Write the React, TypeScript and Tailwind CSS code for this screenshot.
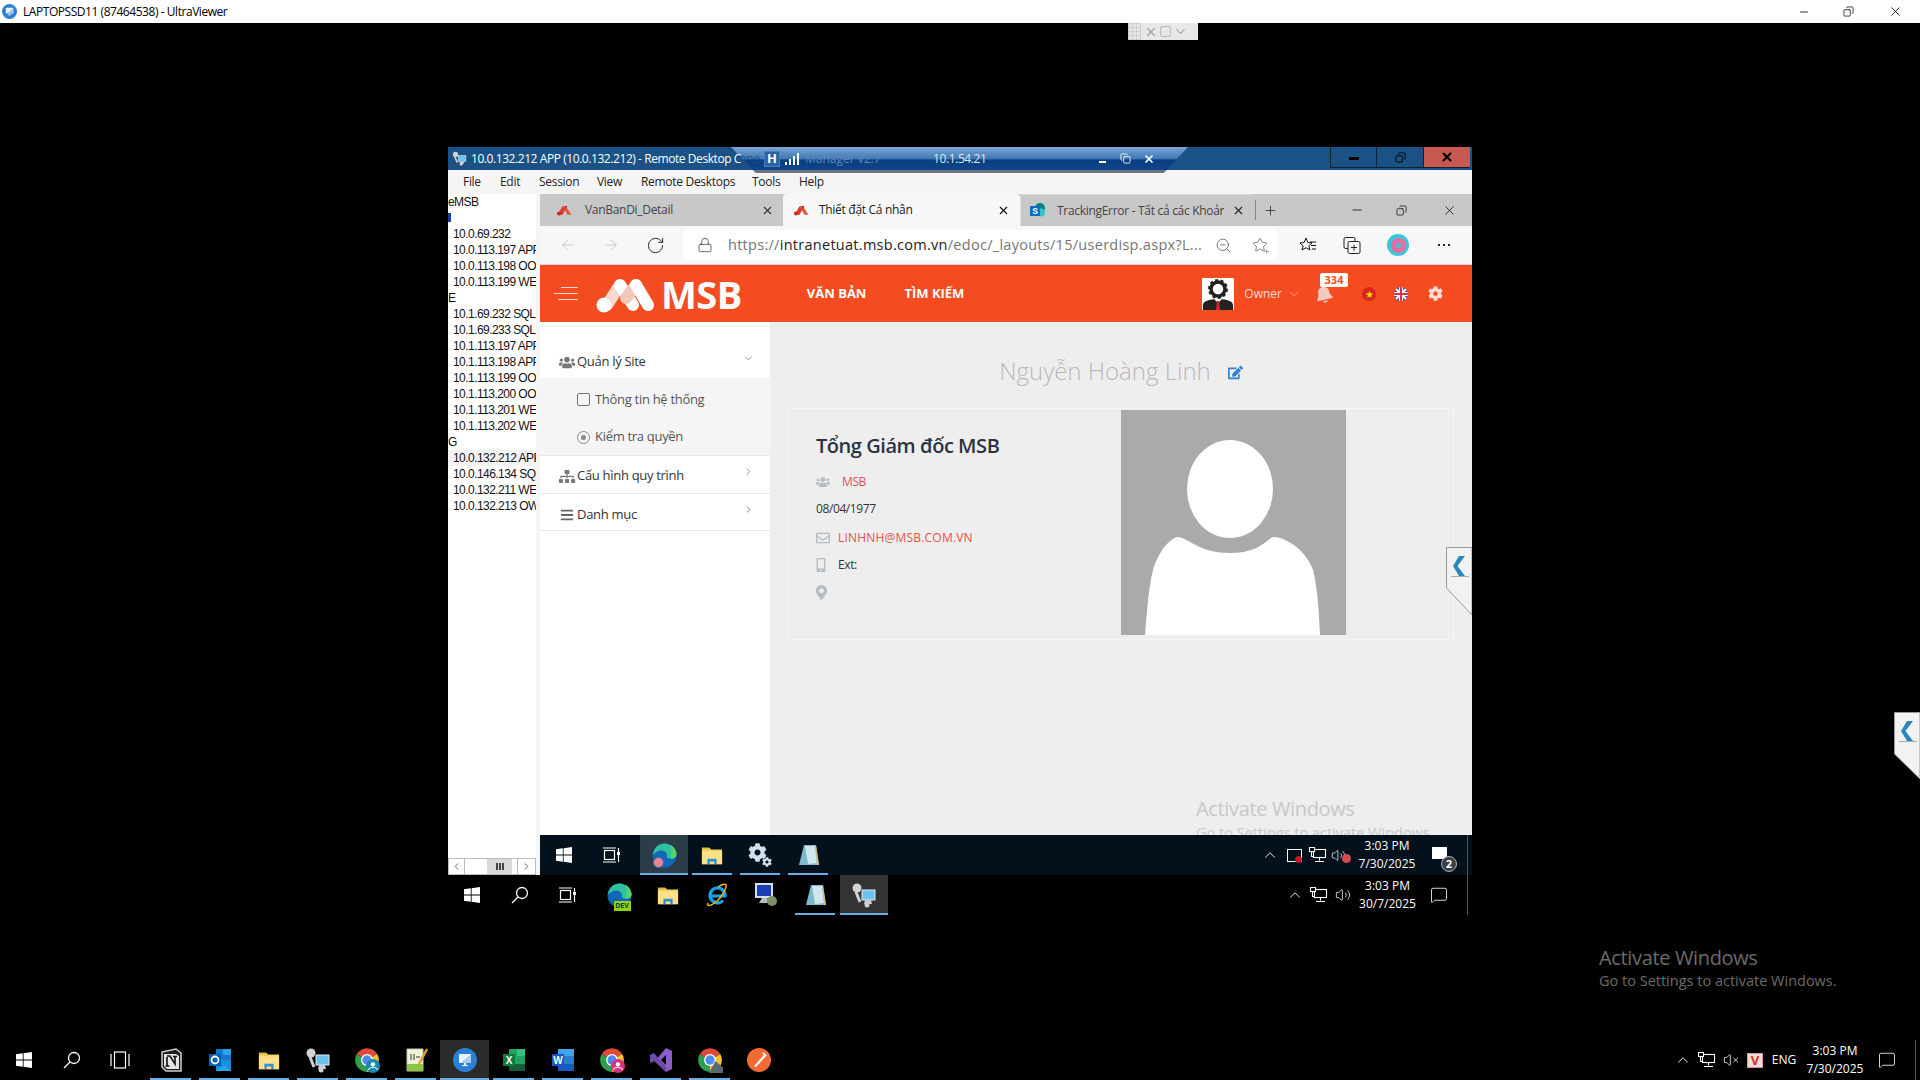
import React from "react";
import { ArrowLeft, ArrowRight, ChevronDown, ChevronLeft, ChevronRight, ChevronUp, Copy, Lock, MessageSquare, Minus, Plus, RotateCw, Square, Star, Volume2, VolumeX, X, ZoomOut } from "lucide-react";
import { FaBars, FaBell, FaCog, FaEdit, FaMapMarkerAlt, FaMobileAlt, FaRegEnvelope, FaSitemap, FaUsers } from "react-icons/fa";

const Win = ({ s = 16 }: { s?: number }) => (
  <svg width={s} height={s} viewBox="0 0 16 16" fill="#fff">
    <path d="M0 2.3 6.8 1.3V7.5H0zM7.6 1.2 16 0V7.5H7.6zM0 8.4H6.8V14.7L0 13.7zM7.6 8.4H16V16L7.6 14.8z" />
  </svg>
);
const TaskView = () => (
  <svg width="18" height="16" viewBox="0 0 18 16" fill="none" stroke="#fff" strokeWidth="1.2">
    <rect x="1.5" y="3.5" width="10" height="9" />
    <path d="M0 1h13M0 15h13M15.5 1v4M15.5 8v7" />
    <rect x="14" y="5" width="3" height="3" fill="#fff" stroke="none" />
  </svg>
);
const TaskViewOuter = () => (
  <svg width="20" height="18" viewBox="0 0 20 18" fill="none" stroke="#fff" strokeWidth="1.2">
    <rect x="4.5" y="1" width="11" height="16" />
    <path d="M1 3v12M19 3v12" />
  </svg>
);
const SearchW = () => (
  <svg width="18" height="18" viewBox="0 0 18 18" fill="none" stroke="#fff" strokeWidth="1.3">
    <circle cx="11" cy="7" r="5.5" />
    <path d="M7 11 1 17" />
  </svg>
);
const Edge = ({ dev, badge }: { dev?: boolean; badge?: boolean }) => (
  <div className="relative w-[25px] h-[25px]">
    <svg width="25" height="25" viewBox="0 0 24 24">
      <circle cx="12" cy="12" r="11.5" fill="#1268b8" />
      <path d="M1 11C2 4 7 .5 12 .5c6 0 11.5 5 11.5 10.5 0 3-3 4-6 4-2 0-4-1-3-3 0-4-6-6-9-4-1.500 1-3 2-4.500 3z" fill="#2fc0a0" />
      <path d="M18 2c3 2 5.500 5 5.500 9 0 3-3 4-6 4 1-4 2-9 .5-13z" fill="#56d36b" />
      <path d="M8 15c0 4 3 8 7 8.500-3 1-6 .5-8-1-3-2-3-7.500 1-7.500z" fill="#0c5fa8" />
    </svg>
    {dev && <span className="absolute left-[7px] bottom-[-3px] w-[17px] h-[10px] bg-[#8ed414] text-[7px] leading-[10px] font-bold text-center text-[#234]">DEV</span>}
    {badge && <span className="absolute left-[1px] bottom-0 w-[11px] h-[11px] rounded-full bg-[#e8849a] border border-[#3b6bb0]" />}
  </div>
);
const Folder = ({ s = 22 }: { s?: number }) => (
  <svg width={s} height={s} viewBox="0 0 24 24">
    <path d="M1 4h8l2 2h12v16H1z" fill="#f6d365" />
    <path d="M1 4h8l2 2H1z" fill="#e5b63e" />
    <path d="M1 8h22v14H1z" fill="#fce08a" />
    <path d="M7 16h10v6h-2.500v-3h-5v3H7z" fill="#2f8fd8" />
  </svg>
);
const IE = () => (
  <svg width="24" height="24" viewBox="0 0 24 24" fill="none">
    <path d="M5 13h15A7.500 7.500 0 1 0 18 17.500" stroke="#17a3ea" strokeWidth="3.200" />
    <path d="M3 20C1 24 6 23 11 19S22 5 21 2c-1-2-5 0-8 2" stroke="#f2b516" strokeWidth="1.500" />
  </svg>
);
const Gears = () => (
  <div className="relative w-[24px] h-[24px] text-[#cfe0ee]">
    <FaCog size={19} className="absolute left-0 top-0" />
    <FaCog size={10} className="absolute right-0 bottom-0" />
  </div>
);
const Note = () => (
  <svg width="24" height="24" viewBox="0 0 24 24">
    <path d="M8 2h12l3 20H3z" fill="#7fb8cc" />
    <path d="M9 3h10l2 17-9 1z" fill="#cfe7ee" />
    <path d="M19 2h1l3 20h-2z" fill="#d6b980" />
  </svg>
);
const RdpComputer = () => (
  <svg width="24" height="26" viewBox="0 0 24 26">
    <rect x="2" y="1" width="18" height="15" fill="#d7dde8" />
    <rect x="4" y="3" width="14" height="11" fill="#1a3fb5" />
    <path d="M9 16h5l4 5H6z" fill="#b7bcc5" />
    <circle cx="19" cy="19" r="5" fill="#7b9266" />
  </svg>
);
const RDCMan = ({ s = 26 }: { s?: number }) => (
  <svg width={s} height={s} viewBox="0 0 26 26">
    <rect x="11" y="8" width="13" height="10" fill="#6cc4ee" stroke="#dfeaf2" />
    <path d="M14 18h6l1 4h-8z" fill="#c9cdd3" />
    <circle cx="6" cy="6" r="4.500" fill="#d3d3d3" />
    <path d="M5 10 9 20" stroke="#d0d0d0" strokeWidth="3" />
    <circle cx="16" cy="23" r="2.500" fill="#cfcfcf" />
  </svg>
);
const Chrome = ({ badge, photo }: { badge?: string; photo?: boolean }) => (
  <svg width="26" height="26" viewBox="0 0 24 24">
    <path d="M12 12 2.500 6.500A11 11 0 0 1 21.500 6.500Z" fill="#de4a3c" />
    <path d="M12 12 21.500 6.500A11 11 0 0 1 12 23Z" fill="#f6c22c" />
    <path d="M12 12 12 23A11 11 0 0 1 2.500 6.500Z" fill="#2f9e4e" />
    <circle cx="12" cy="12" r="5.500" fill="#fff" />
    <circle cx="12" cy="12" r="4.300" fill="#4a8cf0" />
    {badge && (
      <>
        <circle cx="17.500" cy="17.500" r="6.500" fill={badge} />
        <circle cx="17.500" cy="16" r="2" fill="#fff" />
        <path d="M13 21c2-3 7-3 9 0" fill="none" stroke="#fff" />
      </>
    )}
    {photo && <path d="M11 24 17 13l7 6v5z" fill="#5a6a70" />}
  </svg>
);
const Notion = () => (
  <svg width="22" height="24" viewBox="0 0 22 24">
    <path d="M2 4 16 1l5 4v18L6 23l-4-4z" fill="#1c1c1c" stroke="#cfcfcf" strokeWidth="1.500" />
    <path d="M4 6h12l3 2v13H7l-3-3z" fill="#e4e4e4" />
    <path d="M7 8h3l5 8V9M7 18V9M5.500 18h4M13 8.500h4" stroke="#111" strokeWidth="1.600" fill="none" />
  </svg>
);
const Outlook = () => (
  <svg width="24" height="24" viewBox="0 0 24 24">
    <rect x="8" y="1" width="15" height="12" fill="#0f78d4" />
    <rect x="15" y="1" width="8" height="6" fill="#28a8ea" />
    <path d="M8 12h15v11H8z" fill="#1490df" />
    <path d="M8 23l8-6 7 6z" fill="#28a8ea" />
    <rect x="1" y="6" width="12" height="12" fill="#0a5fae" />
    <circle cx="7" cy="12" r="3.500" fill="none" stroke="#fff" strokeWidth="1.800" />
  </svg>
);
const NotepadPP = () => (
  <svg width="24" height="26" viewBox="0 0 24 26">
    <path d="M3 2h16v22H3z" fill="#eef3d9" stroke="#c9c9a8" />
    <path d="M3 17h16v7H3z" fill="#8ec63f" />
    <path d="M7 7v6M10 7v6M12 10h4" stroke="#333" />
    <path d="M23 2 15 17" stroke="#e3a226" strokeWidth="2.500" />
  </svg>
);
const Ultra = ({ s = 24 }: { s?: number }) => (
  <svg width={s} height={s} viewBox="0 0 24 24">
    <circle cx="12" cy="12" r="12" fill="#2b7fd4" />
    <rect x="6" y="6" width="12" height="9" fill="#e9f3fb" />
    <path d="M9 17h6v1H9zM11 15h2v2h-2z" fill="#e9f3fb" />
    <path d="M18 6v9L8 15z" fill="#a9cdec" />
  </svg>
);
const Excel = () => (
  <svg width="24" height="24" viewBox="0 0 24 24">
    <rect x="7" y="1" width="16" height="22" rx="1" fill="#21a366" />
    <rect x="15" y="1" width="8" height="7" fill="#33c481" />
    <rect x="7" y="16" width="16" height="7" fill="#185c37" />
    <rect x="1" y="6" width="12" height="12" fill="#107c41" />
    <text x="7" y="15.500" textAnchor="middle" fontSize="10" fontWeight="700" fill="#fff" fontFamily="Liberation Sans">X</text>
  </svg>
);
const Word = () => (
  <svg width="24" height="24" viewBox="0 0 24 24">
    <rect x="7" y="1" width="16" height="22" rx="1" fill="#2b7cd3" />
    <rect x="7" y="1" width="16" height="7" fill="#41a5ee" />
    <rect x="7" y="16" width="16" height="7" fill="#185abd" />
    <rect x="1" y="6" width="12" height="12" fill="#185abd" />
    <text x="7" y="15.500" textAnchor="middle" fontSize="10" fontWeight="700" fill="#fff" fontFamily="Liberation Sans">W</text>
  </svg>
);
const VS = () => (
  <svg width="24" height="26" viewBox="0 0 24 26">
    <path d="M17 1 23 4v18l-6 3L6 14z" fill="#8a5fc7" />
    <path d="M1 8l4-2 12 14v5L5 14l-2 2-2-1z" fill="#6d4aa5" />
    <path d="M17 8v10l-5-5z" fill="#000" />
  </svg>
);
const Postman = () => (
  <svg width="24" height="24" viewBox="0 0 24 24">
    <circle cx="12" cy="12" r="12" fill="#f36b34" />
    <path d="M7 18 18 6l1 2L9 19z" fill="#fff" />
    <path d="M16 5l3 3" stroke="#fff" strokeWidth="2" />
  </svg>
);
const Net = () => (
  <svg width="18" height="16" viewBox="0 0 18 16" fill="none" stroke="#fff" strokeWidth="1.100">
    <rect x="4.500" y="2.500" width="12" height="8" />
    <rect x="0.500" y="0.500" width="5" height="4" fill="#000" />
    <path d="M10.500 10.500v3M6 14.500h9M2.500 4.500v5h2" />
  </svg>
);
const Msb = ({ s = 16 }: { s?: number }) => (
  <svg width={s} height={s - 4} viewBox="0 0 20 14">
    <path d="M1 13 7 2l3 5-3 6z" fill="#d63a2a" />
    <path d="M7 2h4l7 11h-5z" fill="#e8563f" />
    <path d="M10 2h3l-3 5z" fill="#b82a22" />
    <circle cx="2.500" cy="11.500" r="2.500" fill="#c62b22" />
  </svg>
);
const SharePoint = () => (
  <svg width="16" height="16" viewBox="0 0 16 16">
    <circle cx="10" cy="5" r="5" fill="#038387" />
    <circle cx="11" cy="9.500" r="4" fill="#37c6d0" />
    <rect x="0" y="3" width="10" height="10" fill="#0a6fc2" />
    <text x="5" y="11" textAnchor="middle" fontSize="8.500" fontWeight="700" fill="#fff" fontFamily="Liberation Sans">S</text>
  </svg>
);
const CollapseTab = ({ w, h1, h2 }: { w: number; h1: number; h2: number }) => (
  <svg width={w} height={h2} viewBox={`0 0 ${w} ${h2}`}>
    <path d={`M${w} .5H.5V${h1}L${w} ${h2}Z`} fill="#f2f2f2" stroke="#9a9a9a" />
    <path d="M19 9 11.500 19l7.500 10h-6L7 19l6-10z" fill="#2a88bd" />
    <path d="M5 29.500h18" stroke="#aaa" strokeWidth="1" />
  </svg>
);

const Slot = ({ w, active, line, ml, lineFull, children }: { w: string; active?: string; line?: boolean; lineFull?: boolean; ml?: string; children?: React.ReactNode }) => (
  <div className={`relative h-full flex items-center justify-center ${w} ${ml || ""} ${active || ""}`}>
    {children}
    {line && <span className="absolute left-[4px] right-[4px] bottom-0 h-[2px] bg-[#6aaee6]" />}
    {lineFull && <span className="absolute left-0 right-0 bottom-0 h-[2px] bg-[#6aaee6]" />}
  </div>
);
const Clock = ({ w, a, b }: { w: string; a: string; b: string }) => (
  <div className={`${w} text-center text-white text-[12px] leading-[18px] whitespace-nowrap`}>
    <div>{a}</div>
    <div>{b}</div>
  </div>
);

const tree = ["eMSB", "", "10.0.69.232", "10.0.113.197 APP", "10.0.113.198 OOS", "10.0.113.199 WEB", "E", "10.1.69.232 SQL1", "10.1.69.233 SQL2", "10.1.113.197 APP", "10.1.113.198 APP", "10.1.113.199 OOS", "10.1.113.200 OOS", "10.1.113.201 WEB", "10.1.113.202 WEB", "G", "10.0.132.212 APP", "10.0.146.134 SQL", "10.0.132.211 WEB", "10.0.132.213 OWA"];

export default function App() {
  return (
    <div className="relative w-[1920px] h-[1080px] overflow-hidden bg-black flex flex-col font-['Open_Sans',sans-serif]">
      {/* UltraViewer title */}
      <div className="h-[23px] bg-white flex items-center">
        <div className="ml-[2px] w-[21px]"><Ultra s={15} /></div>
        <span className="text-[12px] tracking-[-0.45px] text-black">LAPTOPSSD11 (87464538) - UltraViewer</span>
        <div className="ml-auto flex items-center text-black">
          <Minus size={12} strokeWidth={1.6} className="mr-[33px]" />
          <Copy size={11} strokeWidth={1.6} className="mr-[34px] -scale-x-100" />
          <X size={15} strokeWidth={1.3} className="mr-[17px]" />
        </div>
      </div>
      <div className="flex-1" />
      {/* Bottom taskbar */}
      <div className="h-[40px] flex items-center bg-black">
        <Slot w="w-[48px]"><Win s={16} /></Slot>
        <Slot w="w-[48px]"><SearchW /></Slot>
        <Slot w="w-[48px]"><TaskViewOuter /></Slot>
        <Slot w="w-[49px]" ml="ml-[2px]" line><Notion /></Slot>
        <Slot w="w-[49px]" line><Outlook /></Slot>
        <Slot w="w-[49px]" line><Folder /></Slot>
        <Slot w="w-[49px]" line><RDCMan /></Slot>
        <Slot w="w-[49px]" line><Chrome badge="#1a8aa8" /></Slot>
        <Slot w="w-[49px]" line><NotepadPP /></Slot>
        <Slot w="w-[49px]" active="bg-[#2b2b2b]" lineFull><Ultra /></Slot>
        <Slot w="w-[49px]" line><Excel /></Slot>
        <Slot w="w-[49px]" line><Word /></Slot>
        <Slot w="w-[49px]" line><Chrome badge="#d6337c" /></Slot>
        <Slot w="w-[49px]" line><VS /></Slot>
        <Slot w="w-[49px]" line><Chrome photo /></Slot>
        <Slot w="w-[49px]"><Postman /></Slot>
        <div className="ml-auto h-full flex items-center text-white">
          <div className="w-[24px] flex justify-center"><ChevronUp size={18} strokeWidth={1.2} /></div>
          <div className="w-[24px] flex justify-center"><Net /></div>
          <div className="w-[23px] flex justify-center"><VolumeX size={16} strokeWidth={1.2} /></div>
          <div className="w-[26px] flex justify-center">
            <span className="w-[16px] h-[15px] bg-[#f4dcd6] border border-[#c9a] text-[#d5342a] text-[13px] leading-[13px] text-center font-bold">V</span>
          </div>
          <div className="w-[32px] text-center text-[12px]">ENG</div>
          <Clock w="w-[70px]" a="3:03 PM" b="7/30/2025" />
          <div className="w-[34px] flex justify-center"><MessageSquare size={18} strokeWidth={1.1} /></div>
          <div className="w-[16px] h-full flex items-center"><span className="ml-[11px] w-px h-full bg-[#555]" /></div>
        </div>
      </div>

      {/* Floating toolbar */}
      <div className="absolute left-[1128px] top-[23px] w-[70px] h-[17px] bg-[#e8e8e8] flex items-center text-[#aaa]">
        <div className="w-[13px] h-full bg-[#cfcfcf] mr-[3px] grid grid-cols-3 gap-px p-px">
          {Array.from({ length: 12 }).map((_, i) => <span key={i} className="bg-[#e8e8e8]" />)}
        </div>
        <X size={14} strokeWidth={2.5} />
        <Square size={13} strokeWidth={1.5} className="ml-[1px]" />
        <ChevronDown size={15} strokeWidth={2} className="ml-[1px]" />
      </div>

      {/* Outer watermark */}
      <div className="absolute left-[1599px] top-[944px] text-[#6b6b6b] whitespace-nowrap">
        <div className="text-[20px] leading-[28px] tracking-[-0.35px]">Activate Windows</div>
        <div className="text-[14.500px] leading-[18px]">Go to Settings to activate Windows.</div>
      </div>
      {/* Outer collapse tab */}
      <div className="absolute left-[1894px] top-[712px]"><CollapseTab w={26} h1={42} h2={67} /></div>

      {/* RDP window */}
      <div className="absolute left-[448px] top-[147px] w-[1024px] flex flex-col">
        <div className="relative h-[23px] bg-[#1a5285] flex items-center">
          <div className="ml-[4px] w-[19px]"><RDCMan s={15} /></div>
          <span className="relative z-20 text-white text-[12px] tracking-[-0.43px] whitespace-nowrap">10.0.132.212 APP (10.0.132.212) - Remote Desktop C</span>
          <div className="ml-auto flex h-[21px] self-start text-black">
            <div className="w-[47px] border-l border-r border-b border-[#123] flex items-center justify-center"><span className="w-[10px] h-[3px] bg-black mt-[3px]" /></div>
            <div className="w-[47px] border-r border-b border-[#123] flex items-center justify-center"><Copy size={11} strokeWidth={2} className="-scale-x-100" /></div>
            <div className="w-[46px] mr-[2px] bg-[#c75a50] border-b border-[#123] flex items-center justify-center"><X size={14} strokeWidth={3.5} /></div>
          </div>
          {/* Connection bar */}
          <div className="absolute left-[283px] top-0 w-[457px] h-[26px] z-10 bg-[linear-gradient(#7ba6d3_0%,#3f78b4_45%,#0a3f82_50%,#0e4488_88%,#6b7683_88%)] [clip-path:polygon(0_0,100%_0,94.7%_100%,5.4%_100%)] flex items-center text-[12px] pb-[3px]">
            <div className="w-[33px] pl-[8px] text-[#1d4f86] overflow-hidden whitespace-nowrap">nne</div>
            <div className="w-[16px] h-[16px] bg-[#2a62a8] border border-[#4c80bd] text-white font-bold text-[13px] leading-[13px] text-center">H</div>
            <svg width="22" height="14" viewBox="0 0 22 14" className="ml-[3px]"><path d="M2 10h2v3H2zM6 7h2v6H6zM10 4h2v9h-2zM14 1h2v12h-2z" fill="#fff" /></svg>
            <div className="w-[128px] text-[#5d88b6] whitespace-nowrap overflow-hidden">Manager v2.7</div>
            <div className="w-[80px] text-[#dde7f2] tracking-[-0.4px] whitespace-nowrap">10.1.54.21</div>
            <div className="ml-[77px] w-[24px] flex justify-center"><span className="w-[7px] h-[2px] bg-white mt-[6px]" /></div>
            <Copy size={11} strokeWidth={1.8} className="text-white ml-[6px]" />
            <X size={12} strokeWidth={3.5} className="text-white ml-[12px]" />
          </div>
        </div>
        {/* Menu */}
        <div className="h-[24px] bg-[#f5f5f5] flex items-center pl-[15px] text-[12px] tracking-[-0.3px] text-[#222]">
          <span className="w-[37px]">File</span>
          <span className="w-[39px]">Edit</span>
          <span className="w-[58px]">Session</span>
          <span className="w-[44px]">View</span>
          <span className="w-[111px]">Remote Desktops</span>
          <span className="w-[47px]">Tools</span>
          <span>Help</span>
        </div>
        {/* Body */}
        <div className="h-[681px] flex bg-[#f5f5f5]">
          <div className="w-[88px] bg-white flex flex-col mr-[4px]">
            <div className="flex-1 overflow-hidden font-['Liberation_Sans',sans-serif] text-[12px] tracking-[-0.55px] leading-[16px] text-[#111] whitespace-nowrap">
              {tree.map((t, i) => (
                <div key={i} className={`h-[16px] overflow-hidden ${t.length > 4 ? "pl-[5px]" : ""} ${i === 16 ? "bg-[#f3f3f3]" : ""}`}>
                  {i === 1 ? <span className="block w-[3px] h-[9px] mt-[3px] bg-[#1a3f90]" /> : t}
                </div>
              ))}
            </div>
            <div className="h-[17px] flex border border-[#bbb] text-[#555] items-stretch">
              <div className="w-[16px] flex items-center justify-center border-r border-[#bbb]"><ChevronLeft size={11} /></div>
              <div className="w-[22px]" />
              <div className="w-[25px] bg-[#d9d9d9] flex items-center justify-center gap-[1px]">
                <span className="w-[2px] h-[7px] bg-[#444]" /><span className="w-[2px] h-[7px] bg-[#444]" /><span className="w-[2px] h-[7px] bg-[#444]" />
              </div>
              <div className="w-[6px] border-r border-[#bbb]" />
              <div className="flex-1 flex items-center justify-center"><ChevronRight size={11} /></div>
            </div>
          </div>
          {/* Browser */}
          <div className="w-[932px] flex flex-col">
            {/* Tabs */}
            <div className="h-[32px] bg-[#c8c8c8] flex items-stretch text-[12px] text-[#444]">
              <div className="w-[243px] flex items-center pl-[17px]">
                <Msb /><span className="ml-[12px] tracking-[-0.3px]">VanBanDi_Detail</span>
                <X size={13} className="ml-auto mr-[9px] text-[#333]" />
              </div>
              <div className="w-[237px] bg-[#f7f7f7] rounded-t-[4px] flex items-center pl-[11px]">
                <Msb /><span className="ml-[9px] tracking-[-0.3px] text-[#222]">Thiết đặt Cá nhân</span>
                <X size={13} className="ml-auto mr-[10px] text-[#111]" />
              </div>
              <div className="w-[232px] border-l border-t border-[#ddd] rounded-t-[4px] flex items-center pl-[9px]">
                <SharePoint />
                <span className="ml-[11px] w-[167px] overflow-hidden whitespace-nowrap tracking-[-0.3px]">TrackingError - Tất cả các Khoản</span>
                <X size={13} className="ml-auto mr-[7px] text-[#222]" />
              </div>
              <span className="ml-[3px] my-[6px] w-px bg-[#888]" />
              <Plus size={15} strokeWidth={1.2} className="self-center ml-[7px] text-[#222]" />
              <div className="ml-auto flex items-center text-[#111]">
                <Minus size={14} strokeWidth={1.4} className="mr-[32px]" />
                <Copy size={11} strokeWidth={1.6} className="mr-[35px] -scale-x-100" />
                <X size={15} strokeWidth={1.3} className="mr-[15px]" />
              </div>
            </div>
            {/* Toolbar */}
            <div className="h-[39px] bg-[#f7f7f7] border-b border-[#d4d4d4] flex items-center">
              <ArrowLeft size={18} strokeWidth={1} className="ml-[19px] text-[#bbb]" />
              <ArrowRight size={18} strokeWidth={1} className="ml-[25px] text-[#bbb]" />
              <RotateCw size={19} strokeWidth={1.2} className="ml-[26px] text-[#222]" />
              <div className="ml-[18px] w-[595px] h-[30px] bg-white rounded-[4px] flex items-center">
                <Lock size={16} strokeWidth={1} className="ml-[14px] text-[#222]" />
                <span className="ml-[15px] text-[14.500px] tracking-[0.28px] whitespace-nowrap text-[#767676]">https://<span className="text-[#222]">intranetuat.msb.com.vn</span>/edoc/_layouts/15/userdisp.aspx?L...</span>
                <div className="ml-auto flex items-center text-[#555]">
                  <ZoomOut size={17} strokeWidth={1.1} className="mr-[20px]" />
                  <div className="relative mr-[10px]">
                    <Star size={16} strokeWidth={1.1} />
                    <Plus size={7} strokeWidth={1.5} className="absolute right-[-2px] bottom-[-2px]" />
                  </div>
                </div>
              </div>
              <svg width="18" height="16" viewBox="0 0 18 16" className="ml-[21px]" fill="none" stroke="#111">
                <path d="M7 1 8.800 5.500 13 6 9.800 8.800 11 13 7 10.700 3 13 4.200 8.800 1 6 5.200 5.500z" fill="#fff" />
                <path d="M11 5h6M12 8.500h5M13 12h4" />
              </svg>
              <svg width="18" height="18" viewBox="0 0 18 18" className="ml-[26px]" fill="none" stroke="#222">
                <rect x="1" y="1.500" width="11" height="11" rx="1.500" fill="#f7f7f7" />
                <rect x="5" y="5.500" width="12" height="12" rx="1.500" fill="#f7f7f7" />
                <path d="M11 8.500v6M8 11.500h6" />
              </svg>
              <div className="ml-[26px] w-[22px] h-[22px] rounded-full bg-[#38c7d8] flex items-center justify-center">
                <span className="w-[15px] h-[15px] rounded-full border-[5px] border-[#ee6aa0] bg-[#38c7d8]" />
              </div>
              <div className="ml-[29px] flex gap-[3px]">
                <span className="w-[2px] h-[2px] bg-[#222]" /><span className="w-[2px] h-[2px] bg-[#222]" /><span className="w-[2px] h-[2px] bg-[#222]" />
              </div>
            </div>
            {/* MSB header */}
            <div className="h-[57px] bg-[#f44c20] flex items-center text-white relative">
              <div className="ml-[14px] w-[24px] flex flex-col items-end gap-[5px]">
                <span className="h-px w-[17px] bg-white/80" />
                <span className="h-px w-[24px] bg-white/80" />
                <span className="h-px w-[20px] bg-white/80" />
              </div>
              <svg width="64" height="40" viewBox="0 0 64 40" className="ml-[15px]">
                <g fill="none" strokeLinecap="round" strokeWidth="12">
                  <path d="M27 11 14 31" stroke="#f8d8cf" />
                  <path d="M27 11 40 31" stroke="#ffffff" />
                  <path d="M43 11 33 24" stroke="#f3c6ba" />
                  <path d="M43 11 55 31" stroke="#ffffff" />
                </g>
                <circle cx="11" cy="31" r="7.500" fill="#fff" />
              </svg>
              <span className="ml-[4px] text-[38px] leading-[40px] font-bold tracking-[-0.5px]">MSB</span>
              <span className="ml-[65px] text-[13px] font-bold">VĂN BẢN</span>
              <span className="ml-[38px] text-[13px] font-bold">TÌM KIẾM</span>
              <div className="ml-auto flex items-center">
                <div className="w-[32px] h-[32px] bg-white rounded-[1px] flex items-center justify-center overflow-hidden">
                  <svg width="32" height="32" viewBox="0 0 32 32">
                    <circle cx="16" cy="11" r="7" fill="none" stroke="#222" strokeWidth="3.500" />
                    <circle cx="16" cy="11" r="9" fill="none" stroke="#222" strokeWidth="2" strokeDasharray="3 2.600" />
                    <path d="M1 32v-5c0-4 6-5 11-6l4 4 4-4c5 1 11 2 11 6v5z" fill="#222" />
                    <path d="M15 23h2l1 9h-4z" fill="#d8232a" />
                  </svg>
                </div>
                <span className="ml-[10px] text-[12px] text-[#f9dcd2]">Owner</span>
                <ChevronDown size={14} strokeWidth={1.2} className="ml-[5px] text-[#f9c8b8]" />
                <div className="relative ml-[14px] w-[18px]">
                  <FaBell size={18} className="text-[#f7ccc0] -rotate-12" />
                  <span className="absolute left-[5px] top-[-12px] w-[28px] h-[14px] bg-white rounded-[2px] text-[#f44c20] text-[11px] leading-[14px] font-bold text-center">334</span>
                </div>
                <div className="ml-[29px] w-[14px] h-[14px] rounded-full bg-[#d7261e] flex items-center justify-center text-[#ffde00] text-[10px] leading-none">★</div>
                <div className="ml-[18px] w-[14px] h-[14px] rounded-full overflow-hidden bg-[#4a5ba6] flex items-center justify-center">
                  <svg width="14" height="14" viewBox="0 0 14 14"><path d="M0 0 14 14M14 0 0 14" stroke="#fff" strokeWidth="2" /><path d="M7 0v14M0 7h14" stroke="#fff" strokeWidth="4" /><path d="M7 0v14M0 7h14" stroke="#d4304a" strokeWidth="2" /></svg>
                </div>
                <FaCog size={15} className="ml-[20px] mr-[29px] text-[#fbdcd2]" />
              </div>
            </div>
            {/* Main */}
            <div className="h-[513px] flex relative">
              <div className="w-[230px] bg-white text-[13px] text-[#333] tracking-[-0.3px] pt-[24px]">
                <div className="h-[32px] flex items-center pl-[17px]">
                  <FaUsers size={13} className="text-[#777] w-[20px]" /><span>Quản lý Site</span>
                  <ChevronDown size={11} className="ml-auto mr-[16px] mb-[8px] text-[#888]" />
                </div>
                <div className="h-[77px] pt-[3px] bg-[#f5f5f5] text-[#555]">
                  <div className="h-[37px] flex items-center pl-[37px]">
                    <span className="w-[13px] h-[13px] border-[1.500px] border-[#777] rounded-[2px]" /><span className="ml-[5px]">Thông tin hệ thống</span>
                  </div>
                  <div className="h-[37px] pt-[1px] flex items-center pl-[37px]">
                    <span className="w-[13px] h-[13px] border border-[#888] rounded-full flex items-center justify-center"><span className="w-[5px] h-[5px] bg-[#888] rounded-full" /></span><span className="ml-[5px]">Kiểm tra quyền</span>
                  </div>
                </div>
                <div className="h-[39px] pt-[3px] border-y border-[#e8e8e8] flex items-center pl-[17px]">
                  <FaSitemap size={13} className="text-[#777] w-[20px]" /><span>Cấu hình quy trình</span>
                  <ChevronRight size={11} className="ml-auto mr-[16px] mb-[10px] text-[#888]" />
                </div>
                <div className="h-[37px] pt-[5px] border-b border-[#e8e8e8] flex items-center pl-[17px]">
                  <FaBars size={14} className="text-[#666] w-[20px]" /><span>Danh mục</span>
                  <ChevronRight size={11} className="ml-auto mr-[16px] mb-[10px] text-[#888]" />
                </div>
              </div>
              <div className="flex-1 bg-[#eeeeee] relative overflow-hidden">
                <div className="mt-[31px] h-[36px] flex items-center justify-center">
                  <span className="text-[24px] font-light text-[#b9b9b9]">Nguyễn Hoàng Linh</span>
                  <FaEdit size={15} className="ml-[17px] mt-[2px] text-[#2f7fd0]" />
                </div>
                <div className="ml-[18px] mt-[19px] w-[666px] h-[232px] border border-[#f5f5f5] flex">
                  <div className="w-[332px] pl-[27px]">
                    <div className="mt-[23px] h-[28px] text-[20px] leading-[28px] font-semibold text-[#2a3440] tracking-[-0.45px]">Tổng Giám đốc MSB</div>
                    <div className="mt-[8px] text-[12px] tracking-[-0.4px] text-[#333]">
                      <div className="h-[27px] flex items-center"><FaUsers size={14} className="text-[#b4bcc4]" /><span className="ml-[12px] text-[#e8504a]">MSB</span></div>
                      <div className="h-[28px] flex items-center">08/04/1977</div>
                      <div className="h-[28px] flex items-center pt-[1px]"><FaRegEnvelope size={14} className="text-[#b4bcc4]" /><span className="ml-[8px] tracking-[0.2px] text-[#e8504a]">LINHNH@MSB.COM.VN</span></div>
                      <div className="h-[27px] flex items-center"><FaMobileAlt size={14} className="text-[#b4bcc4] w-[14px] -ml-[2px]" /><span className="ml-[10px]">Ext:</span></div>
                      <div className="h-[28px] flex items-center -ml-[2px]"><FaMapMarkerAlt size={15} className="text-[#b4bcc4]" /></div>
                    </div>
                  </div>
                  <div className="w-[225px] h-[225px] mt-[1px] bg-[#aaaaaa]">
                    <svg width="225" height="225" viewBox="0 0 225 225">
                      <ellipse cx="109" cy="79" rx="43" ry="49" fill="#fff" />
                      <path d="M24 225C26 200 28 175 32 160 38 140 50 127 58 127 70 130 80 143 109 143 138 143 145 130 152 127 165 127 185 140 192 160 196 175 198 200 199 225Z" fill="#fff" />
                    </svg>
                  </div>
                </div>
                <div className="absolute right-0 top-[225px]"><CollapseTab w={26} h1={41} h2={68} /></div>
                <div className="absolute left-[426px] top-[473px] text-[#c8c8c8] whitespace-nowrap">
                  <div className="text-[20px] leading-[28px] tracking-[-0.35px]">Activate Windows</div>
                  <div className="text-[14.500px] leading-[18px] mt-[1px]">Go to Settings to activate Windows.</div>
                </div>
              </div>
            </div>
            {/* Inner taskbar */}
            <div className="h-[40px] bg-[#02111c] flex items-center relative z-10">
              <Slot w="w-[48px]"><Win s={16} /></Slot>
              <Slot w="w-[48px]"><TaskView /></Slot>
              <Slot w="w-[48px]" ml="ml-[4px]" active="bg-[#2b3d48]" lineFull><Edge badge /></Slot>
              <Slot w="w-[48px]" line><Folder /></Slot>
              <Slot w="w-[48px]" line><Gears /></Slot>
              <Slot w="w-[48px]" line><Note /></Slot>
              <div className="ml-auto h-full flex items-center text-white">
                <div className="w-[24px] flex justify-center"><ChevronUp size={18} strokeWidth={1.2} /></div>
                <div className="w-[24px] flex justify-center relative">
                  <span className="w-[15px] h-[13px] border border-white" />
                  <span className="absolute left-[13px] top-[7px] w-[7px] h-[7px] rounded-full bg-[#c3162a]" />
                </div>
                <div className="w-[24px] flex justify-center"><Net /></div>
                <div className="w-[22px] flex justify-center relative">
                  <Volume2 size={15} strokeWidth={1.2} className="mr-[6px]" />
                  <span className="absolute left-[12px] top-[6px] w-[9px] h-[9px] rounded-full bg-[#d94a52]" />
                </div>
                <Clock w="w-[70px]" a="3:03 PM" b="7/30/2025" />
                <div className="w-[34px] flex justify-center relative">
                  <span className="w-[15px] h-[12px] bg-white mb-[4px]" />
                  <span className="absolute left-[19px] top-[9px] w-[16px] h-[16px] rounded-full bg-[#3a3f44] border border-[#aaa] text-[11px] leading-[14px] text-center font-bold">2</span>
                </div>
                <div className="w-[16px] h-full flex items-center"><span className="ml-[11px] w-px h-full bg-[#555]" /></div>
              </div>
            </div>
          </div>
        </div>
        {/* RDP taskbar */}
        <div className="h-[40px] bg-black flex items-center">
          <Slot w="w-[48px]"><Win s={16} /></Slot>
          <Slot w="w-[48px]"><SearchW /></Slot>
          <Slot w="w-[48px]"><TaskView /></Slot>
          <Slot w="w-[48px]" ml="ml-[3px]"><Edge dev /></Slot>
          <Slot w="w-[49px]"><Folder /></Slot>
          <Slot w="w-[49px]"><IE /></Slot>
          <Slot w="w-[48px]"><RdpComputer /></Slot>
          <Slot w="w-[48px]" ml="ml-[2px]" line><Note /></Slot>
          <Slot w="w-[48px]" ml="ml-[1px]" active="bg-[#333333]" lineFull><RDCMan /></Slot>
          <div className="ml-auto h-full flex items-center text-white">
            <div className="w-[24px] flex justify-center"><ChevronUp size={18} strokeWidth={1.2} /></div>
            <div className="w-[24px] flex justify-center"><Net /></div>
            <div className="w-[24px] flex justify-center"><Volume2 size={16} strokeWidth={1.2} /></div>
            <Clock w="w-[65px]" a="3:03 PM" b="30/7/2025" />
            <div className="w-[38px] flex justify-center"><MessageSquare size={18} strokeWidth={1.1} /></div>
            <div className="w-[14px] h-full flex items-center"><span className="ml-[9px] w-px h-full bg-[#555]" /></div>
          </div>
        </div>
      </div>
    </div>
  );
}
